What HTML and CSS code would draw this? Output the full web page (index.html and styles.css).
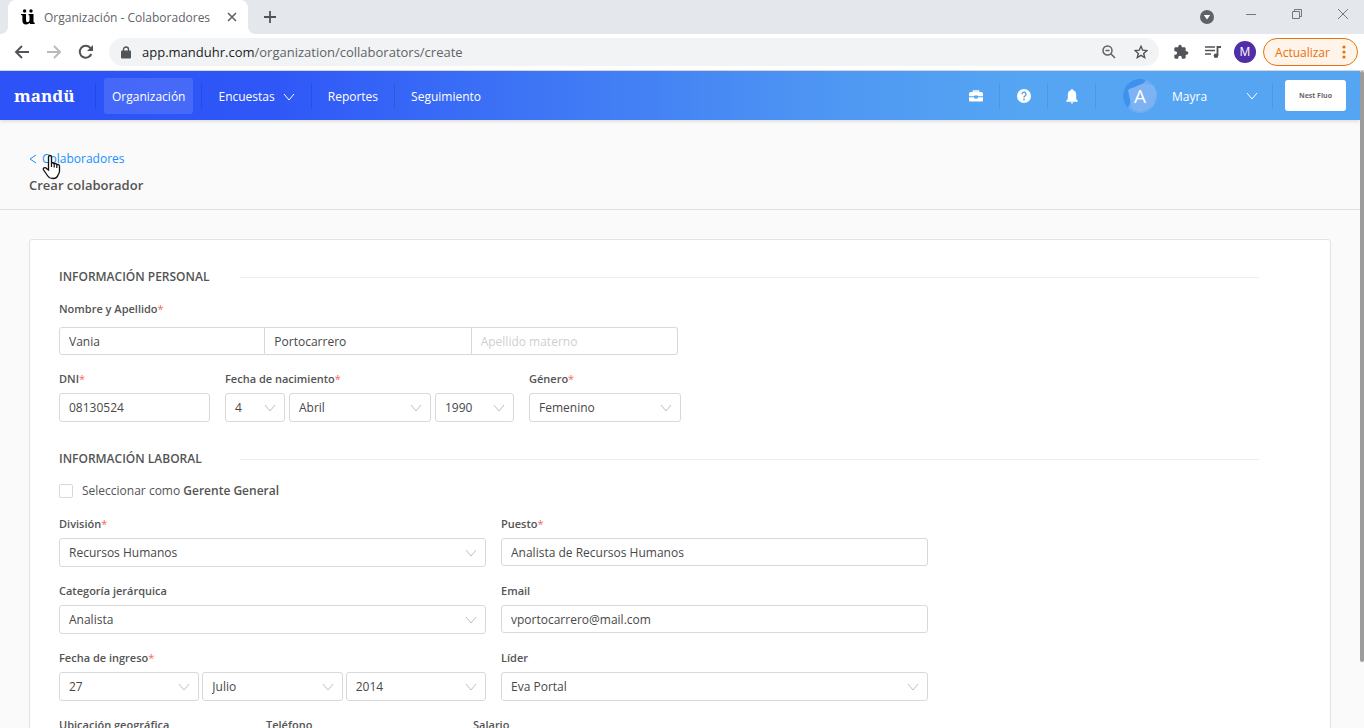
FILE: index.html
```html
<!DOCTYPE html>
<html lang="es">
<head>
    <meta charset="UTF-8">
    <meta name="viewport" content="width=device-width, initial-scale=1.0">
    <title>Organización - Colaboradores</title>
    <link rel="stylesheet" href="styles.css">
</head>
<body>
    <svg class="sprite" aria-hidden="true">
        <symbol id="chevron" viewBox="0 0 12 8"><path d="M1 1l5 6 5-6" fill="none" stroke="currentColor"/></symbol>
    </svg>

    <div class="tabstrip">
        <div class="tab">
            <svg width="14" height="16" viewBox="0 0 14 16">
                <circle cx="3.6" cy="2" r="1.7"/><circle cx="10" cy="2" r="1.7"/>
                <path d="M0 5h5v6.200q0 2 1.500 2t2-1.600V6.600L7.500 6V5h5v8l1.200.800V15H9l-.300-1.200Q7.500 15.400 5 15.400q-3.600 0-3.600-3.600V6.600L0 6z"/>
            </svg>
            <span class="tab-title">Organización - Colaboradores</span>
            <button type="button" aria-label="Cerrar pestaña">
                <svg width="10" height="10" viewBox="0 0 10 10"><path d="M1 1l8 8M9 1L1 9" fill="none" stroke="#5f6368" stroke-width="1.600"/></svg>
            </button>
        </div>
        <button type="button" class="new-tab" aria-label="Nueva pestaña">
            <svg width="12" height="12" viewBox="0 0 12 12"><path d="M6 0v12M0 6h12" fill="none" stroke="#505357" stroke-width="1.800"/></svg>
        </button>
        <div class="window-buttons">
            <button type="button" aria-label="Buscar pestañas">
                <svg width="14" height="14" viewBox="0 0 14 14"><circle cx="7" cy="7" r="7" fill="#5f6368"/><path d="M3.800 5h6.400L7 9.500z" fill="#fff"/></svg>
            </button>
            <button type="button" aria-label="Minimizar">
                <svg width="10" height="10" viewBox="0 0 10 10"><path d="M0 5.500h10" stroke="#777"/></svg>
            </button>
            <button type="button" aria-label="Restaurar">
                <svg width="10" height="10" viewBox="0 0 10 10"><path d="M.5 2.500h7v7h-7zM2.500 2.500v-2h7v7h-2" fill="none" stroke="#777"/></svg>
            </button>
            <button type="button" aria-label="Cerrar">
                <svg width="10" height="10" viewBox="0 0 10 10"><path d="M0 0l10 10M10 0L0 10" stroke="#777"/></svg>
            </button>
        </div>
    </div>

    <div class="toolbar">
        <button type="button" aria-label="Atrás">
            <svg width="16" height="14" viewBox="0 0 16 14"><path d="M15 7H2M8 1L2 7l6 6" fill="none" stroke="#505357" stroke-width="1.900"/></svg>
        </button>
        <button type="button" aria-label="Adelante">
            <svg width="16" height="14" viewBox="0 0 16 14"><path d="M1 7h13M8 1l6 6-6 6" fill="none" stroke="#b7b9bb" stroke-width="1.900"/></svg>
        </button>
        <button type="button" aria-label="Recargar">
            <svg width="16" height="16" viewBox="0 0 16 16"><path d="M13.300 10A6 6 0 1 1 12.300 3.800L13.500 5" fill="none" stroke="#505357" stroke-width="2"/><path d="M15 1v6H9z" fill="#505357"/></svg>
        </button>
        <div class="omnibox">
            <svg width="10" height="13" viewBox="0 0 10 13"><rect y="4.500" width="10" height="8" rx="1" fill="#505357"/><path d="M2.500 5V3.500a2.500 2.500 0 0 1 5 0V5" fill="none" stroke="#505357" stroke-width="1.400"/></svg>
            <span class="url"><b>app.manduhr.com</b>/organization/collaborators/create</span>
            <button type="button" aria-label="Zoom">
                <svg width="14" height="14" viewBox="0 0 14 14"><g fill="none" stroke="#5f6368" stroke-width="1.500"><circle cx="5.500" cy="5.500" r="4.500"/><path d="M8.800 8.800L13 13M3.500 5.500h4"/></g></svg>
            </button>
            <button type="button" aria-label="Marcador">
                <svg width="14" height="14" viewBox="0 0 14 14"><path d="M7 1.300l1.700 3.900 4.200.4-3.200 2.800 1 4.100L7 10.300l-3.700 2.200 1-4.100L1.100 5.600l4.200-.4z" fill="none" stroke="#505357" stroke-width="1.400"/></svg>
            </button>
        </div>
        <button type="button" class="extensions" aria-label="Extensiones">
            <svg width="16" height="16" viewBox="0 0 24 24"><path d="M20.500 11H19V7c0-1.100-.9-2-2-2h-4V3.500a2.500 2.500 0 0 0-5 0V5H4c-1.100 0-2 .9-2 2v3.800h1.500a2.700 2.700 0 0 1 0 5.400H2V20c0 1.100.9 2 2 2h3.800v-1.500a2.700 2.700 0 0 1 5.400 0V22H17c1.100 0 2-.9 2-2v-4h1.500a2.500 2.500 0 0 0 0-5z" fill="#505357"/></svg>
        </button>
        <button type="button" class="media" aria-label="Multimedia">
            <svg width="16" height="14" viewBox="0 0 16 14"><path d="M0 2h10M0 5.500h10M0 9h6" stroke="#505357" stroke-width="1.600"/><path d="M12.500 10.500V2H16" fill="none" stroke="#505357" stroke-width="1.800"/><circle cx="11" cy="10.800" r="2.300" fill="#505357"/></svg>
        </button>
        <span class="profile">M</span>
        <button type="button" class="update">Actualizar
            <svg width="4" height="14" viewBox="0 0 4 14" fill="#e8710a"><circle cx="2" cy="2" r="1.600"/><circle cx="2" cy="7" r="1.600"/><circle cx="2" cy="12" r="1.600"/></svg>
        </button>
    </div>

    <div class="viewport">
        <div class="page">
            <header class="navbar">
                <a href="#" class="logo">mandü</a>
                <nav>
                    <div class="nav-item"><a href="#" class="active">Organización</a></div>
                    <div class="nav-item"><a href="#">Encuestas <svg class="nav-chevron" width="12" height="8"><use href="#chevron"/></svg></a></div>
                    <div class="nav-item"><a href="#">Reportes</a></div>
                    <div class="nav-item"><a href="#">Seguimiento</a></div>
                </nav>
                <div class="nav-right">
                    <button type="button" class="nav-icon" aria-label="Empresa">
                        <svg width="14" height="14" viewBox="0 0 14 14"><path d="M4.500 3.500V2h5v1.500" fill="none" stroke="#fff" stroke-width="1.500"/><path d="M1.500 3h11A1.500 1.500 0 0 1 14 4.500V7.300H8.800V6.500H5.200v.8H0V4.500A1.500 1.500 0 0 1 1.500 3zM0 8.300h5.200V9.500h3.600V8.300H14v3.200a1 1 0 0 1-1 1H1a1 1 0 0 1-1-1z" fill="#fff"/></svg>
                    </button>
                    <button type="button" class="nav-icon" aria-label="Ayuda">
                        <svg width="14" height="14" viewBox="0 0 14 14"><circle cx="7" cy="7" r="7" fill="#fff"/><path d="M5 5.200a2 2 0 1 1 3.200 1.600Q7 7.500 7 8.500" fill="none" stroke="#50a0f2" stroke-width="1.400"/><circle cx="7" cy="10.500" r=".9" fill="#50a0f2"/></svg>
                    </button>
                    <button type="button" class="nav-icon" aria-label="Notificaciones">
                        <svg width="12" height="16" viewBox="0 0 12 16"><path d="M6 1q1 0 1 1.200Q10.200 3 10.200 7v4l1.600 2v.8H.2V13l1.600-2V7q0-4 3.200-4.800Q5 1 6 1zM4.500 14.300h3Q7.300 15.500 6 15.500t-1.500-1.200z" fill="#fff"/></svg>
                    </button>
                    <a href="#" class="user">
                        <svg class="avatar" width="36" height="36" viewBox="0 0 36 36" aria-hidden="true"><circle cx="18" cy="18" r="17" fill="#6fadf2"/><path d="M1 18A17 17 0 0 1 24 2l-4 5-13 4 2 12-3 7A17 17 0 0 1 1 18z" fill="#3e91ef"/><path d="M6 12l16-7 10 3 3 8-4 12-12 6-9-3z" fill="#7db3f3"/><text x="18" y="25">A</text></svg>
                        <span>Mayra</span>
                        <svg class="nav-chevron" width="12" height="8"><use href="#chevron"/></svg>
                    </a>
                    <span class="company">Nest Fluo</span>
                </div>
            </header>

            <div class="page-head">
                <a href="#" class="back">
                    <svg width="8" height="10" viewBox="0 0 8 10"><path d="M7 1L1 5l6 4" fill="none" stroke="currentColor"/></svg>
                    Colaboradores
                    <svg class="hand" width="20" height="26" viewBox="0 0 20 26"><path d="M6.500 16V3.200q0-1.700 1.500-1.700t1.500 1.700V9q2-.8 2.700.7 2-.7 2.600.9 2.700-.5 2.700 2V17q0 2.500-1.500 4-1 3.500-5 3.500-3.500 0-5.200-2.500L1.600 16q-.8-1.600.5-2.200 1.500-.5 2.700 1z" fill="#fff" stroke="#111" stroke-width="1.300"/><path d="M9.500 9v4M12.200 10v3.500M14.800 11v3" fill="none" stroke="#111" stroke-width="1.200"/></svg>
                </a>
                <h1>Crear colaborador</h1>
            </div>

            <form class="card">
                <h2>INFORMACIÓN PERSONAL</h2>
                <div class="field full-name">
                    <label for="nombre">Nombre y Apellido<i>*</i></label>
                    <div class="joined">
                        <input type="text" id="nombre" value="Vania">
                        <input type="text" aria-label="Apellido paterno" value="Portocarrero">
                        <input type="text" aria-label="Apellido materno" placeholder="Apellido materno">
                    </div>
                </div>
                <div class="row personal">
                    <div class="field">
                        <label for="dni">DNI<i>*</i></label>
                        <input type="text" id="dni" class="tall" value="08130524">
                    </div>
                    <div class="field">
                        <label for="nac-dia">Fecha de nacimiento<i>*</i></label>
                        <div class="date birth">
                            <div class="select"><select id="nac-dia"><option>4</option></select><svg width="12" height="8"><use href="#chevron"/></svg></div>
                            <div class="select"><select aria-label="Mes"><option>Abril</option></select><svg width="12" height="8"><use href="#chevron"/></svg></div>
                            <div class="select"><select aria-label="Año"><option>1990</option></select><svg width="12" height="8"><use href="#chevron"/></svg></div>
                        </div>
                    </div>
                    <div class="field">
                        <label for="genero">Género<i>*</i></label>
                        <div class="select"><select id="genero"><option>Femenino</option></select><svg width="12" height="8"><use href="#chevron"/></svg></div>
                    </div>
                </div>

                <h2>INFORMACIÓN LABORAL</h2>
                <label class="check"><input type="checkbox"><span>Seleccionar como <b>Gerente General</b></span></label>
                <div class="row halves">
                    <div class="field">
                        <label for="division">División<i>*</i></label>
                        <div class="select"><select id="division"><option>Recursos Humanos</option></select><svg width="12" height="8"><use href="#chevron"/></svg></div>
                    </div>
                    <div class="field">
                        <label for="puesto">Puesto<i>*</i></label>
                        <input type="text" id="puesto" value="Analista de Recursos Humanos">
                    </div>
                    <div class="field">
                        <label for="categoria">Categoría jerárquica</label>
                        <div class="select"><select id="categoria"><option>Analista</option></select><svg width="12" height="8"><use href="#chevron"/></svg></div>
                    </div>
                    <div class="field">
                        <label for="email">Email</label>
                        <input type="email" id="email" value="vportocarrero@mail.com">
                    </div>
                    <div class="field">
                        <label for="ing-dia">Fecha de ingreso<i>*</i></label>
                        <div class="date">
                            <div class="select"><select id="ing-dia"><option>27</option></select><svg width="12" height="8"><use href="#chevron"/></svg></div>
                            <div class="select"><select aria-label="Mes de ingreso"><option>Julio</option></select><svg width="12" height="8"><use href="#chevron"/></svg></div>
                            <div class="select"><select aria-label="Año de ingreso"><option>2014</option></select><svg width="12" height="8"><use href="#chevron"/></svg></div>
                        </div>
                    </div>
                    <div class="field">
                        <label for="lider">Líder</label>
                        <div class="select"><select id="lider"><option>Eva Portal</option></select><svg width="12" height="8"><use href="#chevron"/></svg></div>
                    </div>
                </div>
                <div class="row thirds">
                    <div class="field"><label for="ubicacion">Ubicación geográfica</label><input type="text" id="ubicacion"></div>
                    <div class="field"><label for="telefono">Teléfono</label><input type="tel" id="telefono"></div>
                    <div class="field"><label for="salario">Salario</label><input type="text" id="salario"></div>
                </div>
            </form>
        </div>
        <div class="scrollbar"></div>
    </div>
</body>
</html>
```
FILE: styles.css
```css
* { box-sizing: border-box; }
body { font-family: "Open Sans", "Noto Sans", sans-serif; font-size: 12px; margin: 0; height: 100vh; display: flex; flex-direction: column; overflow: hidden; color: #545454; background-color: #fafafa; }
svg { display: block; flex: none; }
.sprite { display: none; }
button { font: inherit; background: none; border: none; padding: 0; display: flex; align-items: center; justify-content: center; cursor: pointer; }
a { text-decoration: none; color: inherit; }

/* browser window */
.tabstrip { flex: none; height: 34px; background-color: #e4e8ec; display: flex; padding: 0 16px 0 8px; }
.tab { width: 240px; background-color: #fff; border-radius: 8px 8px 0 0; display: flex; align-items: center; padding: 0 11px 0 13px; position: relative; }
.tab::before, .tab::after { content: ""; position: absolute; bottom: 0; width: 8px; height: 8px; }
.tab::before { left: -8px; background: radial-gradient(circle at 0 0, transparent 8px, #fff 8px); }
.tab::after { right: -8px; background: radial-gradient(circle at 100% 0, transparent 8px, #fff 8px); }
.tab-title { flex: 1; margin-left: 9px; color: #5f6368; font-size: 12px; white-space: nowrap; }
.new-tab { margin-left: 16px; }
.window-buttons { margin-left: auto; display: flex; gap: 36px; height: 28px; }
.window-buttons button:first-child { margin-right: -4px; padding-top: 6px; }
.toolbar { flex: none; height: 37px; background-color: #fff; border-bottom: 1px solid #d5d7da; display: flex; align-items: center; padding: 0 6px 0 14px; }
.toolbar > button { margin-right: 16px; }
.omnibox { flex: 1; height: 28px; margin-left: -1px; background-color: #f1f3f4; border-radius: 14px; display: flex; align-items: center; padding: 0 11px 0 12px; }
.url { flex: 1; margin-left: 11px; font-size: 13px; color: #5f6368; }
.url b { font-weight: normal; color: #202124; }
.omnibox button { margin-left: 18px; }
.toolbar > .extensions { margin: 0 16px 0 14px; }
.toolbar > .media { margin-right: 13px; }
.profile { width: 22px; height: 22px; border-radius: 50%; background-color: #512da8; color: #fff; line-height: 22px; text-align: center; }
.toolbar > .update { margin: 0 0 0 7px; width: 95px; height: 28px; border: 1px solid #e8710a; border-radius: 14px; background-color: #fef4e9; color: #e8710a; gap: 12px; }

/* page */
.viewport { flex: 1; min-height: 0; display: flex; }
.page { flex: 1; overflow: hidden; }
.scrollbar { width: 4px; height: 90%; background-color: #9c9c9c; border-radius: 2px; }
.navbar { height: 49px; display: flex; align-items: center; color: #fff; background: linear-gradient(90deg, #2c52f8 0%, #2f57f7 20%, #4f98f3 62%, #55a5f3 75%); padding: 0 14px; box-shadow: 0 1px 4px rgba(0, 0, 0, 0.15); position: relative; }
.logo { font-family: "Noto Serif", "DejaVu Serif", serif; font-weight: bold; font-size: 17px; width: 81px; }
nav { display: flex; }
.nav-item { display: flex; align-items: center; height: 26px; border-left: 1px solid rgba(0, 0, 80, 0.12); padding: 0 8px; }
.nav-item a { height: 36px; padding: 2px 8px 0; display: flex; align-items: center; gap: 8px; border-radius: 3px; }
.nav-item .active { background-color: rgba(255, 255, 255, 0.12); }
.nav-right { margin-left: auto; display: flex; align-items: center; }
.nav-icon { width: 48px; height: 26px; border-right: 1px solid rgba(0, 60, 140, 0.12); }
.user { display: flex; align-items: center; width: 177px; height: 26px; padding: 0 14px 0 26px; border-right: 1px solid rgba(0, 60, 140, 0.12); }
.user span { margin-left: 14px; padding-top: 2px; flex: 1; }
.avatar text { fill: #fff; font-size: 19px; text-anchor: middle; }
.company { margin-left: 12px; width: 61px; height: 31px; background-color: #fff; border-radius: 3px; color: #6f6767; font-size: 7px; font-weight: bold; line-height: 31px; text-align: center; }
.page-head { height: 90px; border-bottom: 1px solid #dfe2ea; padding: 30px 29px 0; }
.back { display: inline-flex; align-items: center; gap: 5px; line-height: 18px; color: #1890ff; position: relative; }
.hand { position: absolute; left: 13px; top: 4px; }
h1 { margin: 8px 0 0; font-size: 13px; line-height: 18px; font-weight: 600; }

/* form */
.card { margin: 29px 29px 0; padding: 28px 71px 29px 29px; background-color: #fff; border: 1px solid #e2e3e6; border-radius: 3px; }
h2 { display: grid; grid-template-columns: 181px 1fr; align-items: center; margin: 0 0 14px; font-size: 12px; line-height: 18px; font-weight: 600; white-space: nowrap; }
h2::after { content: ""; height: 1px; background-color: #eceef1; }
.field label { display: block; font-size: 11px; font-weight: 600; line-height: 18px; margin-bottom: 5px; }
.field i { color: #f5694f; font-style: normal; font-weight: normal; }
input[type="text"], input[type="email"], input[type="tel"], select { display: block; width: 100%; height: 28px; border: 1px solid #d9d9d9; border-radius: 3px; background-color: #fff; padding: 0 9px; font: inherit; color: #484848; outline: none; }
input::placeholder { color: #cfcfcf; }
input.tall, select { height: 29px; }
select { appearance: none; grid-area: 1 / 1; }
.select { display: grid; align-items: center; }
.select svg { grid-area: 1 / 1; justify-self: end; margin-right: 9px; color: #bfbfbf; pointer-events: none; }
.full-name { max-width: 619px; }
.full-name label { margin-bottom: 9px; }
.joined { display: grid; grid-template-columns: repeat(3, 1fr); }
.joined input { border-radius: 0; }
.joined input + input { border-left: none; }
.joined input:first-child { border-radius: 3px 0 0 3px; }
.joined input:last-child { border-radius: 0 3px 3px 0; }
.row { display: grid; column-gap: 15px; row-gap: 15px; margin-top: 15px; align-items: start; }
.personal { grid-template-columns: 151px 289px 152px; column-gap: 15px; margin-bottom: 28px; }
.date { display: grid; grid-template-columns: repeat(3, 1fr); gap: 3px; }
.birth { grid-template-columns: 60px 1fr 79px; gap: 4px; }
.check { display: flex; align-items: center; gap: 9px; line-height: 18px; }
.check input { appearance: none; width: 14px; height: 14px; margin: 0; border: 1px solid #d9d9d9; border-radius: 2px; }
.check b { font-weight: 600; }
.halves { max-width: 869px; grid-template-columns: 1fr 1fr; }
.thirds { max-width: 606px; grid-template-columns: repeat(3, 1fr); }
```
